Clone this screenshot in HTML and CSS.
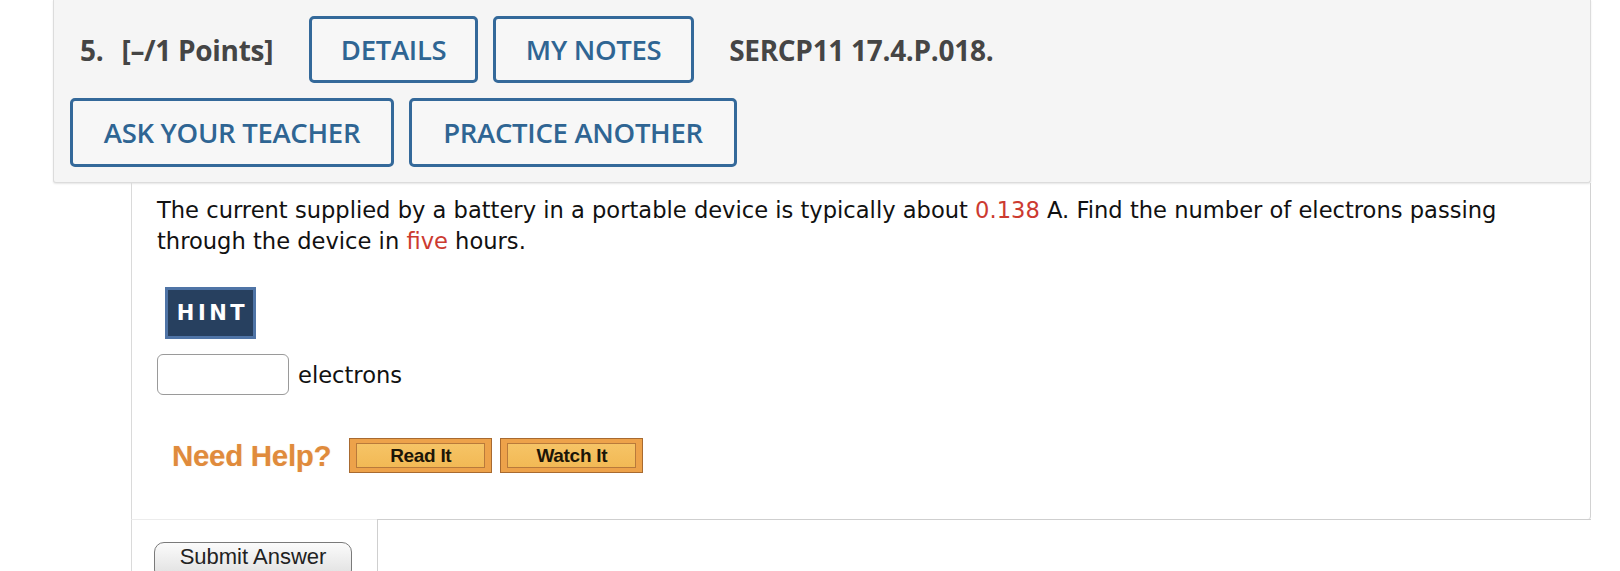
FILE: index.html
```html
<!DOCTYPE html>
<html>
<head>
<meta charset="utf-8">
<link rel="stylesheet" href="styles.css">
</head>
<body>
<div class="header">
  <div class="row row1">
    <span class="qnum">5.</span>
    <span class="points">[–/1 Points]</span>
    <button class="hbtn w-details">DETAILS</button>
    <button class="hbtn w-notes">MY NOTES</button>
    <span class="qid">SERCP11 17.4.P.018.</span>
  </div>
  <div class="row row2">
    <button class="hbtn tall w-ask">ASK YOUR TEACHER</button>
    <button class="hbtn tall w-practice">PRACTICE ANOTHER</button>
  </div>
</div>
<div class="question">
  <p class="qtext"><span>The current supplied by a battery in a portable device is typically about</span> <span class="red">0.138</span> <span>A. Find the number of electrons passing</span> <span>through the device in</span> <span class="red">five</span> <span>hours.</span></p>
  <button class="hint">HINT</button>
  <div class="answer">
    <input class="ans-input" type="text">
    <span class="unit">electrons</span>
  </div>
  <div class="help">
    <span class="needhelp">Need Help?</span>
    <button class="obtn"><span class="obtn-in">Read It</span></button>
    <button class="obtn"><span class="obtn-in">Watch It</span></button>
  </div>
</div>
<div class="footer">
  <div class="foot-left">
    <button class="submit">Submit Answer</button>
  </div>
  <div class="foot-right"></div>
</div>
</body>
</html>
```
FILE: styles.css
```css
* { box-sizing: border-box; }
html, body { margin: 0; padding: 0; background: #fff; }
body { width: 1620px; height: 571px; overflow: hidden; }

.header {
  margin-left: 53px;
  width: 1538px;
  background: #f5f5f5;
  border: 1px solid #dcdcdc;
  border-top: none;
  border-radius: 0 0 3px 3px;
  box-shadow: 0 1px 2px rgba(0,0,0,0.10);
  padding: 16px 0 15px 16px;
  font-family: "Open Sans", "Liberation Sans", sans-serif;
}
.row { display: flex; align-items: center; }
.row1 { height: 67px; }
.row2 { height: 69px; margin-top: 15px; }

.qnum, .points, .qid {
  font-weight: 700;
  font-size: 28px;
  color: #454545;
  letter-spacing: -0.3px;
}
.qnum { margin-left: 10px; margin-right: 18px; }
.points { margin-right: 36px; }
.qid { margin-left: 35px; }

.hbtn {
  font-family: "Open Sans", "Liberation Sans", sans-serif;
  font-weight: 600;
  font-size: 27.5px;
  color: #2f6593;
  background: #f7f7f7;
  border: 3px solid #34699a;
  border-radius: 5px;
  height: 67px;
  padding: 0;
  margin: 0 15px 0 0;
  display: flex;
  align-items: center;
  justify-content: center;
  letter-spacing: -0.3px;
}
.hbtn.tall { height: 69px; }
.w-details { width: 169px; }
.w-notes { width: 201px; margin-right: 0; }
.w-ask { width: 324px; }
.w-practice { width: 328px; }

.question {
  margin-left: 131px;
  width: 1460px;
  border-left: 1px solid #dadada;
  border-right: 1px solid #d2d2d2;
  border-bottom: 1px solid #ececec;
  border-radius: 0 0 4px 0;
  padding: 12px 60px 46px 25px;
  font-family: Verdana, "DejaVu Sans", sans-serif;
  color: #111;
}
.qtext {
  margin: 0;
  font-size: 22.6px;
  line-height: 31px;
}
.red { color: #cc3a30; }

.hint {
  display: block;
  margin: 30px 0 0 8px;
  width: 91px;
  height: 52px;
  background: #27405f;
  border: 3px solid #4f74a6;
  color: #fff;
  font-family: Verdana, "DejaVu Sans", sans-serif;
  font-weight: 700;
  font-size: 21px;
  letter-spacing: 3.5px;
  padding: 0 0 0 4px;
}

.answer {
  display: flex;
  align-items: center;
  margin-top: 15px;
  height: 41px;
}
.ans-input {
  width: 132px;
  height: 41px;
  border: 1.5px solid #9a9a9a;
  border-radius: 6px;
  margin: 0;
  background: #fff;
}
.unit {
  margin-left: 9px;
  font-size: 22.6px;
  line-height: 31px;
  position: relative;
  top: 1px;
}

.help {
  display: flex;
  align-items: center;
  margin-top: 43px;
  margin-left: 15px;
  height: 35px;
}
.needhelp {
  font-family: "Liberation Sans", Arial, sans-serif;
  font-weight: 700;
  font-size: 29.5px;
  color: #e08b3c;
  margin-right: 18px;
  letter-spacing: -0.3px;
  text-shadow: 0 0 1px rgba(224,139,60,0.35);
}
.obtn {
  width: 143px;
  height: 35px;
  margin: 0 8px 0 0;
  padding: 4px 6px;
  border: 1px solid #a86a30;
  background: #eda24a;
  display: flex;
}
.obtn-in {
  flex: 1;
  display: flex;
  align-items: center;
  justify-content: center;
  border: 1px solid #b97a3b;
  background: linear-gradient(#f6c466, #f2b955);
  font-family: "Liberation Sans", Arial, sans-serif;
  font-weight: 700;
  font-size: 19px;
  color: #1c1608;
  letter-spacing: -0.3px;
}

.footer {
  display: flex;
  margin-left: 131px;
  width: 1460px;
  height: 60px;
}
.foot-left {
  width: 246px;
  border-left: 1px solid #dadada;
  padding: 22px 0 0 22px;
}
.foot-right {
  flex: 1;
  margin-top: -1px;
  border-top: 1px solid #cfcfcf;
  border-left: 1px solid #cfcfcf;
}
.submit {
  display: block;
  width: 198px;
  border: 1px solid #7a7a7a;
  border-radius: 10px;
  background: linear-gradient(#fbfbfb, #dedede);
  font-family: "Liberation Sans", Arial, sans-serif;
  font-size: 22px;
  line-height: 24px;
  color: #222;
  padding: 2px 0 10px;
  margin: 0;
}
```
